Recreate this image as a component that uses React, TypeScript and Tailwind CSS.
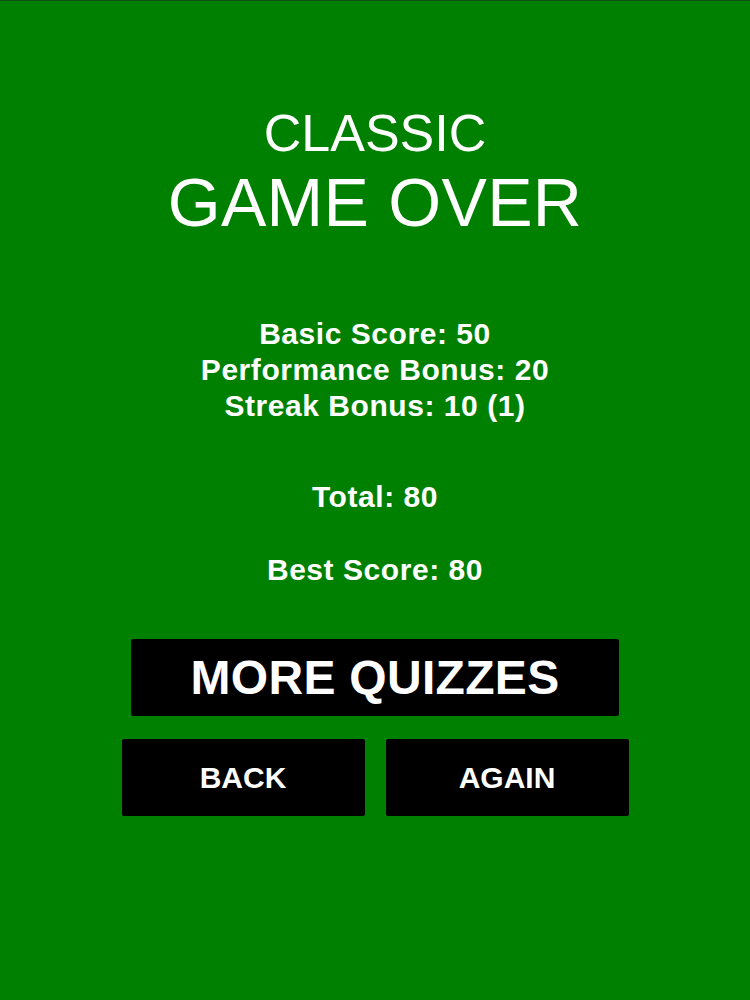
import React from 'react';

const stats = [
  'Basic Score: 50',
  'Performance Bonus: 20',
  'Streak Bonus: 10 (1)',
];

const App: React.FC = () => {
  return (
    <div className="min-h-[1000px] w-full bg-[#008000] border-t border-[#145214] text-white font-['Liberation_Sans',Arial,sans-serif] flex flex-col items-center pt-[106px]">
      {/* Title */}
      <h2 className="text-[52px] leading-none">CLASSIC</h2>
      <h1 className="mt-[9px] text-[68px] leading-none tracking-[0.3px]">GAME OVER</h1>

      {/* Score breakdown */}
      <div className="mt-[80px] flex flex-col items-center font-bold text-[30px] leading-[36px] tracking-[0.55px]">
        {stats.map((s) => (
          <div key={s}>{s}</div>
        ))}
      </div>

      <div className="mt-[55px] font-bold text-[30px] leading-[36px] tracking-[0.55px]">Total: 80</div>
      <div className="mt-[37px] font-bold text-[30px] leading-[36px] tracking-[0.55px]">Best Score: 80</div>

      {/* Buttons */}
      <button className="mt-[51px] w-[488px] h-[77px] bg-black rounded-[2px] flex items-center justify-center font-bold text-[48px] leading-none tracking-[0.3px]">
        MORE QUIZZES
      </button>
      <div className="mt-[23px] flex gap-[21px]">
        <button className="w-[243px] h-[77px] bg-black rounded-[2px] flex items-center justify-center font-bold text-[30px] leading-none">
          BACK
        </button>
        <button className="w-[243px] h-[77px] bg-black rounded-[2px] flex items-center justify-center font-bold text-[30px] leading-none">
          AGAIN
        </button>
      </div>
    </div>
  );
};

export default App;
